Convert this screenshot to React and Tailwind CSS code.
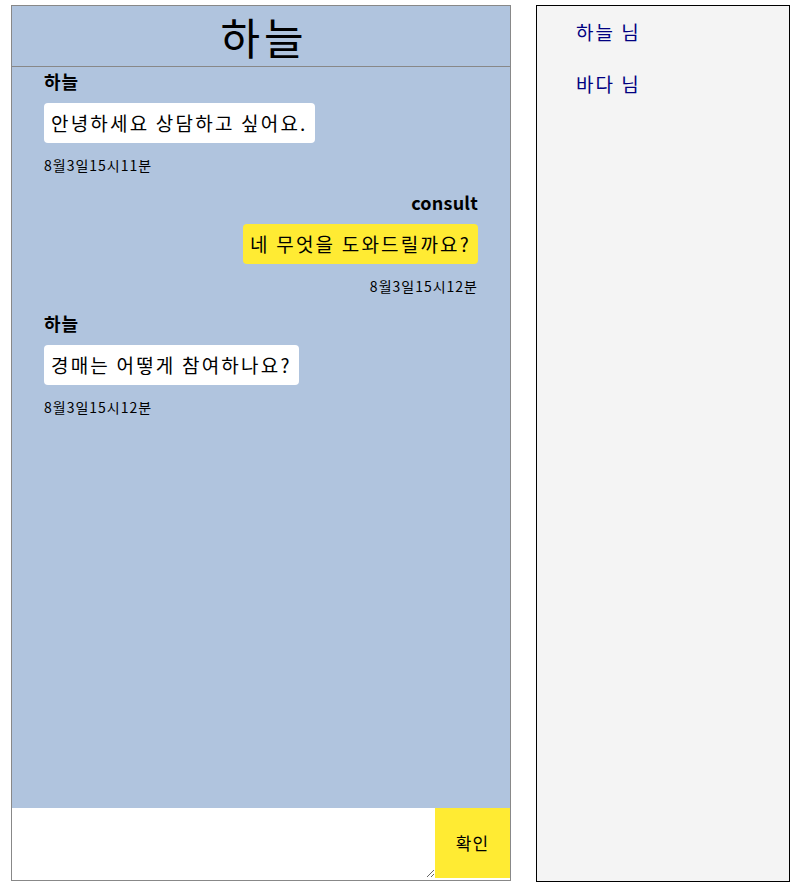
import React from 'react';

const messages = [
  { from: '하늘', text: '안녕하세요 상담하고 싶어요.', time: '8월3일15시11분', mine: false },
  { from: 'consult', text: '네 무엇을 도와드릴까요?', time: '8월3일15시12분', mine: true },
  { from: '하늘', text: '경매는 어떻게 참여하나요?', time: '8월3일15시12분', mine: false },
];

const rooms = ['하늘 님', '바다 님'];

export default function App() {
  return (
    <div
      className="flex gap-[25px] pl-[11px] pt-[5px] bg-white h-[885px]"
      style={{ fontFamily: '"Noto Sans CJK KR", "Noto Sans", sans-serif' }}
    >
      <div className="flex h-[876px] w-[500px] flex-col border border-[#888] bg-[#b0c4de]">
        <div className="flex h-[61px] items-center justify-center border-b border-[#888] pl-[6px] text-[43px] leading-none tracking-[4px]">
          하늘
        </div>
        <div className="flex flex-1 flex-col px-[32px] pt-[2px]">
          {messages.map((m, i) => (
            <div
              key={i}
              className={`flex flex-col ${m.mine ? 'items-end' : 'items-start'} ${i > 0 ? 'mt-[15px]' : ''}`}
            >
              <div
                className={`h-[24px] text-[18px] font-bold leading-[24px] ${
                  m.mine ? 'tracking-[0.2px]' : 'tracking-[1px]'
                }`}
              >
                {m.from}
              </div>
              <div
                className={`mt-[10px] h-[40px] rounded-[4px] px-[7px] text-[19px] leading-[40px] tracking-[2.2px] ${
                  m.mine ? 'bg-[#ffeb33]' : 'bg-white'
                }`}
              >
                {m.text}
              </div>
              <div className="mt-[12px] h-[20px] text-[14px] leading-[20px] tracking-[1px]">{m.time}</div>
            </div>
          ))}
        </div>
        <div className="flex h-[72px] items-start bg-white">
          <textarea className="h-[70px] flex-1 resize-y bg-white outline-none" />
          <button className="h-[70px] w-[75px] bg-[#ffeb33] text-[17px] tracking-[1px]">확인</button>
        </div>
      </div>
      <div className="h-[877px] w-[254px] border border-black bg-[#f4f4f4] pl-[39px] pt-[15px]">
        {rooms.map((r, i) => (
          <div key={i} className="h-[52px] text-[19px] leading-[22px] tracking-[2px] text-[#000080]">
            {r}
          </div>
        ))}
      </div>
    </div>
  );
}
